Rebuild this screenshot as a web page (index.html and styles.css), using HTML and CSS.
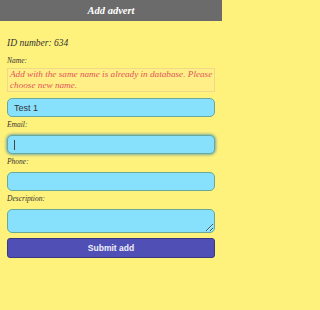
FILE: index.html
```html
<!DOCTYPE html>
<html>
<head>
<meta charset="utf-8">
<link rel="stylesheet" href="styles.css">
</head>
<body>
<div class="page">
  <header class="bar"><h1 class="title">Add advert</h1></header>
  <main class="content">
    <p class="id">ID number: 634</p>
    <label class="lbl first">Name:</label>
    <div class="error">Add with the same name is already in database. Please<br>choose new name.</div>
    <input class="field" type="text" value="Test 1">
    <label class="lbl">Email:</label>
    <div class="field focus"><span class="caret"></span></div>
    <label class="lbl">Phone:</label>
    <input class="field" type="text" value="">
    <label class="lbl">Description:</label>
    <textarea class="field area"></textarea>
    <button class="submit">Submit add</button>
  </main>
</div>
</body>
</html>
```
FILE: styles.css
```css
html, body { margin: 0; padding: 0; }
body { background: #fff27c; width: 222px; height: 310px; overflow: hidden; font-family: "Liberation Serif", serif; }
.page { display: flex; flex-direction: column; }
.bar { background: #6b6b6b; height: 21px; display: flex; align-items: center; justify-content: center; }
.title { margin: 0 0 1px; font-family: "Liberation Serif", serif; font-style: italic; font-weight: bold; font-size: 10.5px; color: #fff; }
.content { padding: 0 7px; display: flex; flex-direction: column; }
.id { margin: 16px 0 0; font-style: italic; font-size: 9.5px; color: #333; line-height: 12px; height: 12px; }
.lbl { display: block; font-style: italic; font-size: 7.5px; color: #333; line-height: 10px; height: 10px; margin-top: 3px; }
.lbl.first { margin-top: 7px; }
.error { box-sizing: border-box; margin-top: 2px; border: 1px solid #f0da88; background: #ffef86; color: #e2545c; font-style: italic; font-size: 9.2px; line-height: 11px; padding: 0 2px; height: 24px; white-space: nowrap; overflow: hidden; }
.field { box-sizing: border-box; display: block; width: 208px; height: 19px; margin: 5px 0 0; background: #88e1fc; border: 1px solid #68a99b; border-radius: 5px; font-family: "Liberation Sans", sans-serif; font-size: 9px; color: #333; padding: 0 6px; outline: none; }
.error + .field { margin-top: 6px; }
.focus { display: flex; align-items: center; box-shadow: 0 0 3px 1px #78a8a0; }
.caret { width: 1px; height: 10px; background: #444; }
.area { height: 24px; resize: vertical; }
.submit { margin-top: 5px; height: 20px; width: 208px; background: #4f4fb6; border: 1px solid #3a3a80; border-radius: 3px; color: #f0f0f8; font-family: "Liberation Sans", sans-serif; font-weight: bold; font-size: 8.5px; }
```
